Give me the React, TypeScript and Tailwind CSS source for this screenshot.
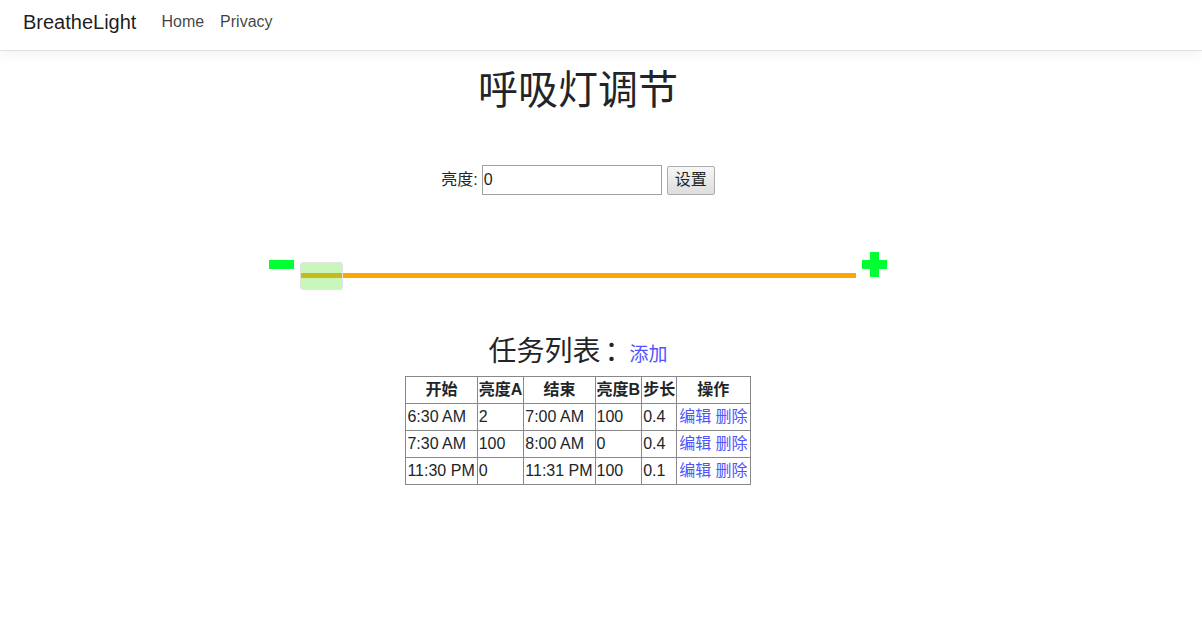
import React from "react";

const font = { fontFamily: '"Liberation Sans", Arial, "Noto Sans CJK SC", sans-serif' };

const rows = [
  ["6:30 AM", "2", "7:00 AM", "100", "0.4"],
  ["7:30 AM", "100", "8:00 AM", "0", "0.4"],
  ["11:30 PM", "0", "11:31 PM", "100", "0.1"],
];

export default function App() {
  return (
    <div className="min-h-[632px] bg-white text-[#212529]" style={font}>
      <nav className="h-[51px] border-b border-[#dee2e6] bg-white shadow-[0_4px_12px_rgba(0,0,0,0.05)] flex items-center pl-[23px]">
        <span className="text-[20px] text-[rgba(0,0,0,0.9)] mr-[17px] -mt-[6px]">BreatheLight</span>
        <span className="text-[16px] text-[rgba(0,0,0,0.75)] px-[8px] -mt-[6px]">Home</span>
        <span className="text-[16px] text-[rgba(0,0,0,0.75)] px-[8px] -mt-[6px]">Privacy</span>
      </nav>
      <main className="w-[1156px] flex flex-col items-center">
        <h1 className="text-[40px] leading-[1.2] mt-[15px] font-normal">呼吸灯调节</h1>
        <div className="mt-[51px] flex items-center">
          <label className="text-[16px] mr-[4px]">亮度:</label>
          <input
            className="w-[180px] h-[30px] border border-[#a0a0a0] px-[1px] text-[16px] outline-none"
            defaultValue="0"
            style={font}
          />
          <button className="ml-[5px] w-[48px] h-[29px] border border-[#adadad] rounded-[2px] bg-gradient-to-b from-[#f6f6f6] to-[#dddddd] text-[16px]">
            设置
          </button>
        </div>
        <div className="mt-[57px] flex items-start">
          <div className="w-[25px] h-[9px] bg-[#00ff33] mt-[8px]" />
          <div className="relative ml-[6px] w-[556px] h-[30px]">
            <div className="absolute left-0 right-0 top-[21px] h-[5px] bg-[#ffa500]" />
            <div className="absolute left-0 top-[10px] w-[43px] h-[28px] rounded-[3px] border border-[#e3e3e3] bg-[rgba(100,230,60,0.35)]" />
          </div>
          <div className="relative ml-[6px] w-[25px] h-[25px]">
            <div className="absolute left-0 top-[8px] w-[25px] h-[9px] bg-[#00ff33]" />
            <div className="absolute left-[8px] top-0 w-[9px] h-[25px] bg-[#00ff33]" />
          </div>
        </div>
        <div className="mt-[53px] flex items-baseline">
          <span className="text-[28px] leading-[1.2]">任务列表</span>
          <span className="text-[28px] leading-[1.2] w-[29px] pl-[4px]">：</span>
          <span className="text-[19px] text-[#5252ff]">添加</span>
        </div>
        <table className="border-collapse border border-[#444] text-[16px] leading-[24px] mt-[6px]">
          <thead>
            <tr>
              {["开始", "亮度A", "结束", "亮度B", "步长", "操作"].map((h) => (
                <th key={h} className="border border-[#888] px-[1px] py-[1px] font-bold">
                  {h}
                </th>
              ))}
            </tr>
          </thead>
          <tbody>
            {rows.map((r, i) => (
              <tr key={i}>
                {r.map((c, j) => (
                  <td key={j} className="border border-[#888] pl-[1px] pr-[2px] py-[1px] text-left">
                    {c}
                  </td>
                ))}
                <td className="border border-[#888] px-[2px] py-[1px] text-[#5252ff]">
                  编辑 删除
                </td>
              </tr>
            ))}
          </tbody>
        </table>
      </main>
    </div>
  );
}
